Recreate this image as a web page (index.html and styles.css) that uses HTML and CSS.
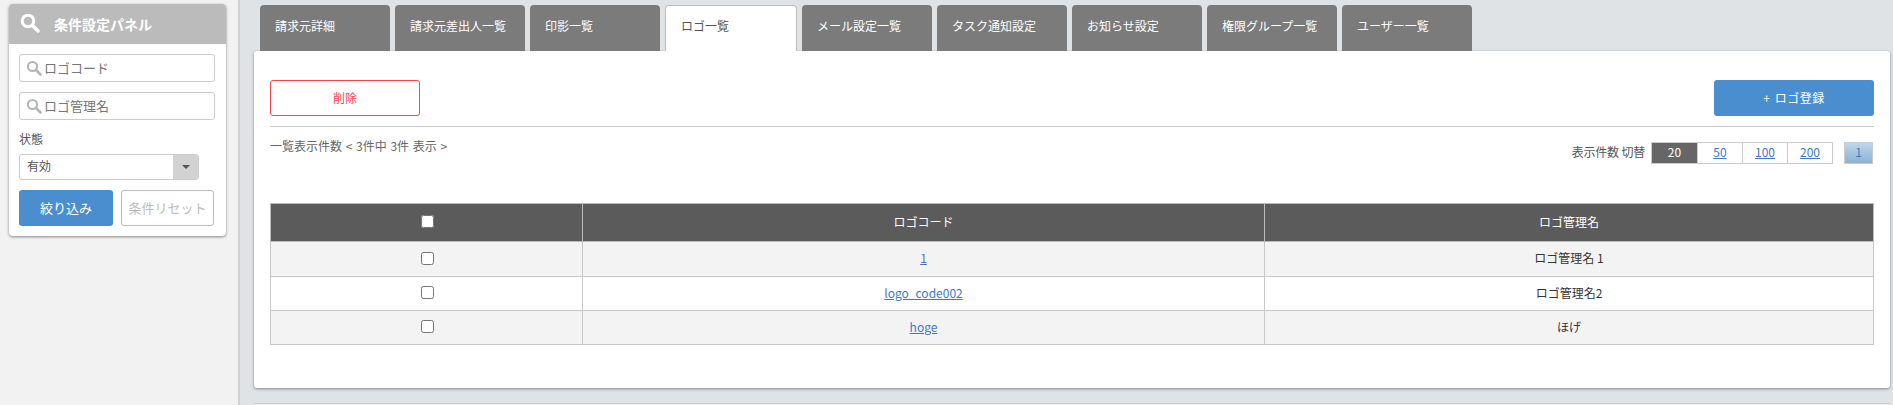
FILE: index.html
```html
<!DOCTYPE html>
<html lang="ja">
<head>
<meta charset="utf-8">
<title>ロゴ一覧</title>
<link rel="stylesheet" href="styles.css">
</head>
<body>
<aside class="sidebar">
  <section class="panel">
    <header class="panel-head">
      <svg class="head-icon" viewBox="0 0 20 20"><circle cx="8" cy="8" r="5.8" fill="none" stroke="currentColor" stroke-width="3"/><path d="M12.5 12.5L18 18" stroke="currentColor" stroke-width="3.4" stroke-linecap="round"/></svg>
      <span>条件設定パネル</span>
    </header>
    <div class="panel-body">
      <div class="search-field">
        <svg class="field-icon" viewBox="0 0 16 16"><circle cx="6.5" cy="6.5" r="4.6" fill="none" stroke="currentColor" stroke-width="2"/><path d="M10 10l4.5 4.5" stroke="currentColor" stroke-width="2.6" stroke-linecap="round"/></svg>
        <span>ロゴコード</span>
      </div>
      <div class="search-field">
        <svg class="field-icon" viewBox="0 0 16 16"><circle cx="6.5" cy="6.5" r="4.6" fill="none" stroke="currentColor" stroke-width="2"/><path d="M10 10l4.5 4.5" stroke="currentColor" stroke-width="2.6" stroke-linecap="round"/></svg>
        <span>ロゴ管理名</span>
      </div>
      <div class="field-label">状態</div>
      <div class="select">
        <span class="select-value">有効</span>
        <span class="select-arrow"><i class="caret"></i></span>
      </div>
      <div class="panel-actions">
        <button class="btn-filter" type="button">絞り込み</button>
        <button class="btn-reset" type="button">条件リセット</button>
      </div>
    </div>
  </section>
</aside>
<main class="main">
  <nav class="tabs">
    <a class="tab">請求元詳細</a>
    <a class="tab">請求元差出人一覧</a>
    <a class="tab">印影一覧</a>
    <a class="tab tab-active">ロゴ一覧</a>
    <a class="tab">メール設定一覧</a>
    <a class="tab">タスク通知設定</a>
    <a class="tab">お知らせ設定</a>
    <a class="tab">権限グループ一覧</a>
    <a class="tab">ユーザー一覧</a>
  </nav>
  <section class="content">
    <div class="actions">
      <button class="btn-delete" type="button">削除</button>
      <button class="btn-add" type="button">+ ロゴ登録</button>
    </div>
    <div class="info-row">
      <div class="count">一覧表示件数 &lt; 3件中 3件 表示 &gt;</div>
      <div class="paging">
        <span class="paging-label">表示件数 切替</span>
        <div class="sizes">
          <span class="size size-current">20</span>
          <a class="size" href="#">50</a>
          <a class="size" href="#">100</a>
          <a class="size" href="#">200</a>
        </div>
        <a class="page" href="#">1</a>
      </div>
    </div>
    <table class="grid">
      <colgroup><col class="col-check"><col class="col-code"><col></colgroup>
      <thead>
        <tr><th><input class="check" type="checkbox"></th><th>ロゴコード</th><th>ロゴ管理名</th></tr>
      </thead>
      <tbody>
        <tr class="row-first"><td><input class="check" type="checkbox"></td><td><a href="#">1</a></td><td>ロゴ管理名 1</td></tr>
        <tr class="row-white"><td><input class="check" type="checkbox"></td><td><a href="#">logo_code002</a></td><td>ロゴ管理名2</td></tr>
        <tr><td><input class="check" type="checkbox"></td><td><a href="#">hoge</a></td><td>ほげ</td></tr>
      </tbody>
    </table>
  </section>
  <div class="foot-line"></div>
</main>
</body>
</html>
```
FILE: styles.css
```css
* { box-sizing: border-box; }
html, body { margin: 0; height: 405px; overflow: hidden; }
body {
  display: flex;
  width: 1893px;
  font-family: "Noto Sans CJK JP", "Liberation Sans", sans-serif;
  font-size: 12px;
  color: #555;
  background: #f2f2f2;
}
button { font-family: inherit; cursor: pointer; }

.sidebar {
  width: 240px;
  flex: none;
  padding: 4px 0 0 9px;
  background: #f2f2f2;
  border-right: 2px solid #d2d2d2;
}
.panel {
  width: 217px;
  height: 232px;
  background: #fff;
  border-radius: 4px;
  box-shadow: 0 1px 3px rgba(0,0,0,.45);
  overflow: hidden;
}
.panel-head {
  display: flex;
  align-items: center;
  height: 40px;
  padding: 0 0 0 11px;
  background: #bbb;
  color: #fff;
  font-size: 14px;
  font-weight: 700;
}
.head-icon { width: 20px; height: 20px; margin: -3px 14px 0 0; }
.panel-body { padding: 10px 11px 0 10px; }
.search-field {
  display: flex;
  align-items: center;
  height: 28px;
  margin-bottom: 10px;
  padding-left: 6px;
  border: 1px solid #ccc;
  border-radius: 3px;
  font-size: 13px;
  color: #777;
}
.search-field span { margin-top: -2px; }
.field-icon { width: 16px; height: 16px; margin-right: 2px; color: #b5b5b5; }
.field-label { margin-top: 9px; line-height: 18px; height: 18px; }
.select {
  display: flex;
  width: 180px;
  height: 26px;
  margin-top: 6px;
  border: 1px solid #ccc;
  border-radius: 3px;
  overflow: hidden;
}
.select-value { flex: 1; padding-left: 7px; line-height: 22px; }
.select-arrow {
  display: flex;
  align-items: center;
  justify-content: center;
  width: 25px;
  background: #d2d2d2;
}
.caret {
  border-left: 4px solid transparent;
  border-right: 4px solid transparent;
  border-top: 4px solid #555;
}
.panel-actions { display: flex; gap: 8px; margin-top: 10px; }
.btn-filter {
  width: 94px;
  height: 36px;
  padding: 0 0 2px;
  border: 0;
  border-radius: 3px;
  background: #4a8ecf;
  color: #fff;
  font-size: 13px;
}
.btn-reset {
  width: 93px;
  height: 36px;
  padding: 0 0 2px;
  border: 1px solid #bbb;
  border-radius: 3px;
  background: #fff;
  color: #bbb;
  font-size: 13px;
}

.main {
  flex: 1;
  min-width: 0;
  padding: 5px 3px 0 14px;
  background: #dfe3e6;
}
.tabs { display: flex; gap: 5px; height: 46px; padding-left: 6px; }
.tab {
  width: 130px;
  padding: 11px 0 0 15px;
  border-radius: 4px 4px 0 0;
  background: #7b7b7b;
  color: #fff;
  line-height: 20px;
}
.tab-active {
  position: relative;
  z-index: 1;
  width: 132px;
  background: #fff;
  color: #555;
  border: 1px solid #bbb;
  border-bottom: 0;
  padding-top: 10px;
}
.content {
  height: 337px;
  padding: 29px 16px 0;
  background: #fff;
  border-radius: 3px;
  box-shadow: 0 1px 3px rgba(60,70,80,.6);
}
.actions {
  display: flex;
  justify-content: space-between;
  padding-bottom: 10px;
  border-bottom: 1px solid #ccc;
}
.btn-delete {
  width: 150px;
  height: 36px;
  padding: 0 0 2px;
  border: 1px solid #f9444e;
  border-radius: 3px;
  background: #fff;
  color: #f9444e;
  font-size: 12px;
}
.btn-add {
  width: 160px;
  height: 36px;
  padding: 0 0 2px;
  border: 0;
  border-radius: 3px;
  background: #4a8ecf;
  color: #fff;
  font-size: 12px;
  word-spacing: 1px;
  letter-spacing: .5px;
}
.info-row {
  display: flex;
  justify-content: space-between;
  height: 76px;
  padding-top: 10px;
}
.count { line-height: 18px; color: #666; word-spacing: 1px; }
.paging { display: flex; align-items: flex-start; padding-top: 5px; }
.paging-label { line-height: 20px; margin-right: 6px; letter-spacing: -.2px; }
.sizes { display: flex; border: 1px solid #ccc; height: 22px; }
.size {
  width: 45px;
  line-height: 18px;
  text-align: center;
  color: #3f78c9;
  border-left: 1px solid #ccc;
}
.size:first-child { border-left: 0; }
.size-current { background: #666; color: #fff; }
.page {
  width: 29px;
  height: 22px;
  margin: 0 1px 0 11px;
  line-height: 18px;
  text-align: center;
  color: #3f78c9;
  text-decoration: none;
  border: 1px solid #ccc;
  background: linear-gradient(#bcd8ec, #8cb1d0);
}
.grid {
  width: 100%;
  table-layout: fixed;
  border-collapse: collapse;
  color: #333;
}
.col-check { width: 312px; }
.col-code { width: 682px; }
.grid th, .grid td {
  padding: 0 0 3px;
  text-align: center;
  font-weight: 400;
  border: 1px solid #c8c8c8;
}
.grid th { height: 38px; background: #5b5b5b; color: #fff; border-color: #bbb; }
.grid td { height: 34px; background: #f3f3f3; }
.grid .row-first td { height: 35px; }
.grid .row-white td { background: #fff; }
.grid a { color: #3f78c9; }
.check { display: block; width: 13px; height: 13px; margin: 1px auto 0; transform: translateX(1px); }
.foot-line { margin-top: 15px; height: 2px; border-top: 1px solid #ccc; background: #eee; }
```
